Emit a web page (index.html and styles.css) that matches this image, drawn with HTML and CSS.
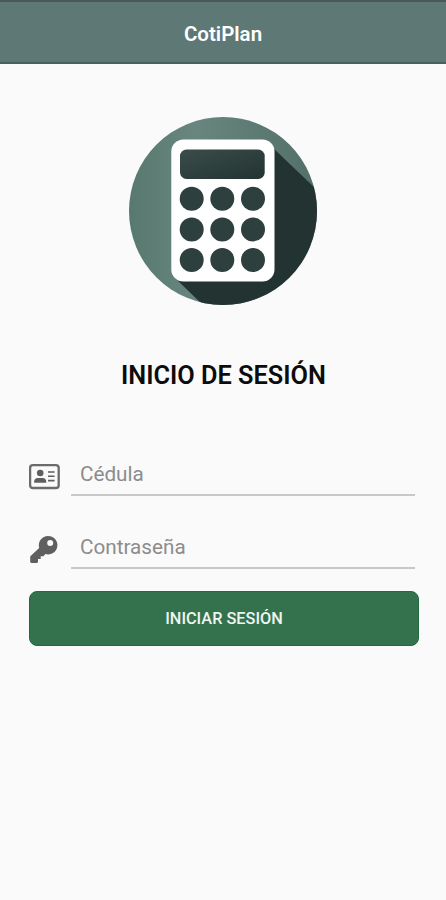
FILE: index.html
```html
<!DOCTYPE html>
<html lang="es">
<head>
    <meta charset="UTF-8">
    <meta name="viewport" content="width=device-width, initial-scale=1.0">
    <title>CotiPlan</title>
    <link rel="stylesheet" href="styles.css">
</head>
<body>
    <div class="header">
        <span class="header-title">CotiPlan</span>
    </div>

    <svg class="logo" viewBox="0 0 188 188">
        <defs>
            <linearGradient id="circleBg" x1="0" y1="0" x2="1" y2="0">
                <stop offset="0" stop-color="#58796f"/>
                <stop offset="0.35" stop-color="#68867e"/>
                <stop offset="1" stop-color="#526f68"/>
            </linearGradient>
            <linearGradient id="darkBg" x1="0" y1="0" x2="1" y2="1">
                <stop offset="0" stop-color="#3b4d4b"/>
                <stop offset="1" stop-color="#223331"/>
            </linearGradient>
            <clipPath id="circleClip">
                <circle cx="94" cy="94" r="94"/>
            </clipPath>
        </defs>
        <g clip-path="url(#circleClip)">
            <rect width="188" height="188" fill="url(#circleBg)"/>
            <path d="M143 30L190 75V190H76L46 161Z" fill="#223331"/>
        </g>
        <rect x="42.3" y="22.5" width="103.2" height="142" rx="12" fill="#fff"/>
        <rect x="51" y="32.5" width="84.7" height="29.5" rx="6.5" fill="url(#darkBg)"/>
        <g fill="#2d403e">
            <circle cx="62.7" cy="81.8" r="12"/>
            <circle cx="93.3" cy="81.8" r="12"/>
            <circle cx="124" cy="81.8" r="12"/>
            <circle cx="62.7" cy="112.4" r="12"/>
            <circle cx="93.3" cy="112.4" r="12"/>
            <circle cx="124" cy="112.4" r="12"/>
            <circle cx="62.7" cy="143" r="12"/>
            <circle cx="93.3" cy="143" r="12"/>
            <circle cx="124" cy="143" r="12"/>
        </g>
    </svg>

    <h1>INICIO DE SESIÓN</h1>

    <form class="login-form">
        <div class="field">
            <svg class="icon" viewBox="0 0 32 32">
                <rect x="1.1" y="5.2" width="28.6" height="22.8" rx="2.8" fill="none" stroke="#6b6b6b" stroke-width="2.3"/>
                <circle cx="11.2" cy="13" r="3.3"/>
                <path d="M5.2 22.8v-1.5c0-2 1.5-3.3 3.4-3.3h5.2c1.9 0 3.4 1.3 3.4 3.3v1.5z"/>
                <path d="M19 11.2h6.6v1.6H19zM19 15.5h6.6v1.6H19zM19 19.8h6.6v1.6H19z"/>
            </svg>
            <input type="text" placeholder="Cédula">
        </div>
        <div class="field">
            <svg class="icon" viewBox="0 0 32 32">
                <path transform="translate(-.8 .7)" fill-rule="evenodd" d="M19.8 2.2a9.3 9.3 0 1 1-2.6 18.2l-2 2.2h-2.7v2.7H9.8V28c0 .7-.5 1.2-1.2 1.2H3.2c-.7 0-1.2-.5-1.2-1.2v-4.6c0-.4.1-.7.4-1l8.6-8.2a9.3 9.3 0 0 1 8.8-12zm2.2 4a3 3 0 1 0 0 6 3 3 0 0 0 0-6z"/>
            </svg>
            <input type="password" placeholder="Contraseña">
        </div>
        <button type="button" class="login-button">INICIAR SESIÓN</button>
    </form>
</body>
</html>
```
FILE: styles.css
```css
body {
    font-family: Roboto, sans-serif;
    background-color: #fafafa;
    margin: 0;
    height: 100vh;
    overflow: hidden;
}

.header {
    box-sizing: border-box;
    height: 64px;
    padding-top: 3px;
    background-color: #5e7876;
    border-top: 2px solid #4b5856;
    border-bottom: 2px solid #49615e;
    display: flex;
    justify-content: center;
    align-items: center;
}

.header-title {
    color: #fff;
    font-size: 20.5px;
    font-weight: 600;
}

.logo {
    display: block;
    width: 188px;
    height: 188px;
    margin: 53px auto 0;
}

h1 {
    margin: 56px 0 0;
    text-align: center;
    text-indent: 1px;
    font-size: 25.3px;
    line-height: 30px;
    font-weight: 600;
    color: #0c0c0c;
}

.login-form {
    margin: 63px 27px 0 29px;
}

.field {
    display: flex;
    height: 42px;
    margin-bottom: 31px;
}

.icon {
    width: 32px;
    height: 32px;
    margin: 6px 10px 0 0;
    fill: #5f5f5f;
}

.field input {
    box-sizing: border-box;
    flex: 1;
    min-width: 0;
    margin-right: 4px;
    padding: 0 9px;
    border: none;
    border-bottom: 2px solid #c8c8c8;
    background: transparent;
    outline: none;
    font-family: inherit;
    font-size: 20.7px;
    color: #222;
}

.field input::placeholder {
    color: #8c8c8c;
}

.login-button {
    display: block;
    width: 100%;
    height: 55px;
    margin-top: -9px;
    border: 1px solid #23693f;
    border-radius: 8px;
    background-color: #34724e;
    color: #eef6f0;
    font-family: inherit;
    font-size: 16.3px;
    font-weight: 500;
}
```
